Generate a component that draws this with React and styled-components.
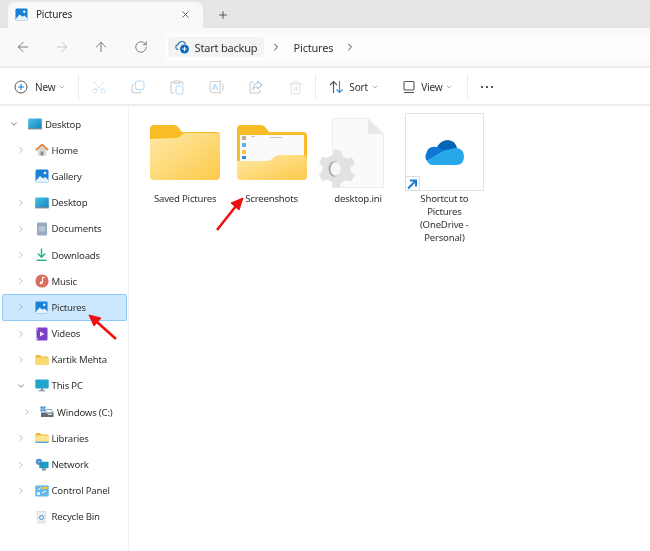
// App.jsx
import React from "react";
import styled, { createGlobalStyle } from "styled-components";
import {
  ArrowLeft,
  ArrowRight,
  ArrowUp,
  RotateCw,
  ChevronRight,
  ChevronDown,
  Plus,
  X,
  Scissors,
  Trash2,
} from "lucide-react";

const Global = createGlobalStyle`
  html, body {
    margin: 0;
    padding: 0;
    background: #ffffff;
  }
  body {
    font-family: "Noto Sans", "Open Sans", sans-serif;
    color: #2b2b2b;
  }
`;

const Window = styled.div`
  width: 650px;
  height: 551px;
  position: relative;
  overflow: hidden;
  display: flex;
  flex-direction: column;
  background: #fff;
  letter-spacing: -0.2px;
  filter: blur(0.4px);
`;

const TabBar = styled.div`
  height: 28px;
  background: #e6e6e6;
  display: flex;
  align-items: flex-end;
  padding-left: 8px;
  flex: none;
`;

const Tab = styled.div`
  width: 195px;
  height: 26px;
  background: #f9f9f9;
  border-radius: 7px 7px 0 0;
  display: flex;
  align-items: center;
  padding: 0 12px 2px 7px;
  box-sizing: border-box;
  font-size: 10px;
`;

const TabTitle = styled.span`
  margin-left: 8px;
  flex: 1;
`;

const NewTab = styled.div`
  width: 40px;
  height: 26px;
  display: flex;
  align-items: center;
  justify-content: center;
  color: #555;
  padding-bottom: 1px;
  box-sizing: border-box;
`;

const NavBar = styled.div`
  height: 38px;
  background: #f9f9f9;
  display: flex;
  align-items: center;
  padding-left: 3px;
  flex: none;
`;

const NavButton = styled.div`
  width: 39.4px;
  display: flex;
  justify-content: center;
  color: ${(p) => (p.$off ? "#bdbdbd" : "#5c5c5c")};
`;

const Address = styled.div`
  margin-left: 4px;
  flex: 1;
  height: 27px;
  background: #fdfdfd;
  border-radius: 4px 0 0 4px;
  display: flex;
  align-items: center;
  padding-left: 3px;
  font-size: 11px;
  color: #333;
`;

const Backup = styled.div`
  width: 96px;
  height: 20px;
  background: #f3f3f3;
  border-radius: 4px;
  display: flex;
  align-items: center;
  padding-left: 7px;
  box-sizing: border-box;
  gap: 5px;
`;

const Crumb = styled.span`
  margin-left: 12px;
  margin-right: 5px;
`;

const CrumbChevron = styled(ChevronRight)`
  margin-left: 6px;
  color: #444;
`;

const Separator = styled.div`
  height: 2px;
  background: #ececec;
  flex: none;
`;

const Toolbar = styled.div`
  height: 36px;
  display: flex;
  align-items: center;
  flex: none;
  font-size: 10px;
  color: #333;
  padding-top: 2px;
  box-sizing: border-box;
`;

const NewButton = styled.div`
  width: 78px;
  display: flex;
  align-items: center;
  padding-left: 14px;
  box-sizing: border-box;
  gap: 7px;
`;

const Divider = styled.div`
  width: 1px;
  height: 26px;
  background: #ececec;
  flex: none;
`;

const ToolIcon = styled.div`
  width: 39.4px;
  display: flex;
  justify-content: center;
  color: ${(p) => (p.$blue ? "#b9daf3" : "#cbcbcb")};
`;

const CutIcon = styled(Scissors)`
  transform: rotate(-90deg);
`;

const Dropdown = styled.div`
  width: ${(p) => p.$w}px;
  display: flex;
  align-items: center;
  padding-left: ${(p) => p.$pad}px;
  box-sizing: border-box;
  gap: 5px;
`;

const SmallChevron = styled(ChevronDown)`
  color: #8a8a8a;
  margin-left: ${(p) => p.$shift}px;
`;

const Dots = styled.div`
  width: 38px;
  display: flex;
  justify-content: center;
  gap: 2.5px;
`;

const Dot = styled.span`
  width: 2.5px;
  height: 2.5px;
  border-radius: 50%;
  background: #222;
`;

const Body = styled.div`
  flex: 1;
  display: flex;
  border-top: 2px solid #ececec;
  min-height: 0;
`;

const Sidebar = styled.div`
  width: 129px;
  box-sizing: border-box;
  border-right: 1px solid #f1f1f1;
  padding-top: 5px;
  flex: none;
`;

const Row = styled.div`
  height: 26.2px;
  width: 125px;
  margin-left: 2px;
  box-sizing: border-box;
  display: flex;
  align-items: center;
  padding-left: ${(p) => 6 + p.$depth * 6.5}px;
  font-size: 9.6px;
  color: #333;
  border-radius: 2px;
  border: 1px solid ${(p) => (p.$selected ? "#8fcbf5" : "transparent")};
  background: ${(p) => (p.$selected ? "#cce8ff" : "transparent")};
`;

const Chevron = styled.div`
  width: 10px;
  display: flex;
  justify-content: center;
  color: ${(p) => (p.$open ? "#444" : "#8c8c8c")};
  flex: none;
`;

const RowIcon = styled.div`
  width: 14px;
  height: 14px;
  margin-left: ${(p) => (p.$depth === 2 ? 8 : 9)}px;
  margin-right: 3px;
  flex: none;
  display: flex;
  align-items: center;
  justify-content: center;
`;

const Content = styled.div`
  flex: 1;
  display: flex;
  align-items: flex-start;
  padding: 7px 0 0 13px;
`;

const Item = styled.div`
  width: 86.4px;
  display: flex;
  flex-direction: column;
  align-items: center;
  flex: none;
`;

const Thumb = styled.div`
  width: 79px;
  height: 78px;
  box-sizing: border-box;
  display: flex;
  align-items: center;
  justify-content: center;
  position: relative;
  border: 1px solid ${(p) => (p.$framed ? "#e4e4e4" : "transparent")};
`;

const Label = styled.div`
  margin-top: 1px;
  width: 70px;
  text-align: center;
  font-size: 9.6px;
  line-height: 13.1px;
  color: #333;
`;

const ShortcutBadge = styled.div`
  position: absolute;
  left: -1px;
  bottom: -1px;
  width: 15px;
  height: 15px;
  background: #fff;
  border: 1px solid #dcdcdc;
  box-sizing: border-box;
  display: flex;
  align-items: center;
  justify-content: center;
`;

const ArrowLayer = styled.svg`
  position: absolute;
  left: 0;
  top: 0;
  pointer-events: none;
`;

const IniFile = styled.div`
  position: relative;
  width: 52px;
  height: 70px;
  margin-left: 1px;
  margin-top: 2px;
`;

const GearHolder = styled.div`
  position: absolute;
  left: -13px;
  top: 29px;
`;

const PicturesIcon = ({ size = 14 }) => (
  <svg width={size} height={size} viewBox="0 0 14 14">
    <rect x="0.5" y="0.5" width="13" height="13" rx="1.5" fill="#1b7fd6" />
    <path d="M0.5 12 L5 7 L8 9.5 L10 8 L13.5 11 V12.5 Q13.5 13.5 12.5 13.5 H1.5 Q0.5 13.5 0.5 12.5 Z" fill="#e6f3fc" />
    <circle cx="10" cy="4" r="1.3" fill="#e6f3fc" />
  </svg>
);

const DesktopIcon = () => (
  <svg width="14" height="12" viewBox="0 0 14 12">
    <defs>
      <linearGradient id="desk" x1="0" y1="0" x2="1" y2="1">
        <stop offset="0" stopColor="#46c3e4" />
        <stop offset="1" stopColor="#1681bd" />
      </linearGradient>
    </defs>
    <rect x="0.2" y="0.5" width="13.6" height="10.5" rx="1" fill="url(#desk)" />
    <rect x="0.2" y="10" width="13.6" height="1.4" fill="#6d8b9b" />
  </svg>
);

const HomeIcon = () => (
  <svg width="15" height="14" viewBox="0 0 15 14">
    <path d="M3 6.5 L7.5 2.5 L12 6.5 V13 H3 Z" fill="#d6d6d6" />
    <rect x="6" y="8.5" width="3" height="4.5" fill="#8b8b8b" />
    <path d="M0.8 7.2 L7.5 1.2 L14.2 7.2" fill="none" stroke="#de7b33" strokeWidth="1.7" />
  </svg>
);

const DocumentsIcon = () => (
  <svg width="12" height="14" viewBox="0 0 12 14">
    <rect x="1" y="0.5" width="10" height="13" rx="1" fill="#98abc0" />
    <rect x="3" y="4.5" width="6" height="5" fill="#b9c7d5" />
  </svg>
);

const DownloadsIcon = () => (
  <svg width="13" height="14" viewBox="0 0 13 14">
    <path d="M6.5 0.5 V9 M2.8 5.6 L6.5 9.3 L10.2 5.6" fill="none" stroke="#2bab8c" strokeWidth="1.4" />
    <rect x="1.5" y="11.6" width="10" height="1.4" fill="#2bab8c" />
  </svg>
);

const MusicIcon = () => (
  <svg width="14" height="14" viewBox="0 0 14 14">
    <circle cx="7" cy="7" r="6.6" fill="#d9705c" />
    <path d="M7.6 3 V8.4 M7.6 3 L9.6 3.8" stroke="#fff" strokeWidth="1.1" fill="none" />
    <circle cx="6.2" cy="8.8" r="1.5" fill="#fff" />
  </svg>
);

const VideosIcon = () => (
  <svg width="12" height="14" viewBox="0 0 12 14">
    <rect x="0.5" y="0.5" width="11" height="13" rx="1" fill="#7a3fc4" />
    <path d="M4 4.5 L8.5 7 L4 9.5 Z" fill="#f0e6ff" />
    <rect x="1" y="1.5" width="1" height="1.5" fill="#d6c2f2" />
    <rect x="1" y="11" width="1" height="1.5" fill="#d6c2f2" />
  </svg>
);

const SmallFolder = ({ light }) => (
  <svg width="14" height="12" viewBox="0 0 14 12">
    <path d="M0.5 2 Q0.5 1 1.5 1 H5 L6.5 2.4 H12.5 Q13.5 2.4 13.5 3.4 V10 Q13.5 11 12.5 11 H1.5 Q0.5 11 0.5 10 Z" fill="#eeb93d" />
    <rect x="0.5" y="3.6" width="13" height="7.4" rx="1" fill={light ? "#ffe38f" : "#fbd96f"} />
    {light && <rect x="0.5" y="9.6" width="13" height="1.4" fill="#4da6dc" />}
  </svg>
);

const MonitorIcon = () => (
  <svg width="14" height="13" viewBox="0 0 14 13">
    <rect x="0.3" y="0.5" width="13.4" height="9" rx="0.8" fill="#22a5cc" />
    <rect x="5.8" y="9.5" width="2.4" height="2" fill="#6f8794" />
    <rect x="3.8" y="11.3" width="6.4" height="1" fill="#6f8794" />
  </svg>
);

const DriveIcon = () => (
  <svg width="14" height="13" viewBox="0 0 14 13">
    <rect x="0.5" y="0.5" width="2.2" height="2.2" fill="#2b8ae0" />
    <rect x="3.2" y="0.5" width="2.2" height="2.2" fill="#2b8ae0" />
    <rect x="0.5" y="3.2" width="2.2" height="2.2" fill="#2b8ae0" />
    <rect x="3.2" y="3.2" width="2.2" height="2.2" fill="#2b8ae0" />
    <rect x="1" y="6.5" width="12.5" height="4.5" fill="#5f6a72" />
    <rect x="6" y="3.5" width="6" height="4" rx="1" fill="none" stroke="#9aa4ab" />
    <rect x="8" y="8" width="4" height="1" fill="#d9e0e4" />
  </svg>
);

const NetworkIcon = () => (
  <svg width="15" height="14" viewBox="0 0 15 14">
    <rect x="4.5" y="3.5" width="10" height="7" rx="0.8" fill="#1e9cc4" />
    <rect x="7.5" y="10.5" width="4" height="2.5" fill="#7b8f9a" />
    <circle cx="4.2" cy="3.6" r="3.3" fill="#3a82c9" />
    <path d="M1.5 3.5 H7 M4.2 0.5 V6.8" stroke="#a9d2ef" strokeWidth="0.6" />
  </svg>
);

const ControlIcon = () => (
  <svg width="14" height="12" viewBox="0 0 14 12">
    <rect x="0.3" y="0.5" width="13.4" height="11" rx="0.8" fill="#62b7e6" />
    <rect x="2" y="7" width="3" height="3" fill="#e8f4fb" />
    <rect x="7" y="2" width="5" height="2" fill="#f3c644" />
    <path d="M3 5 L6 2.5 M7 8 L11 6" stroke="#fff" strokeWidth="1" />
  </svg>
);

const RecycleIcon = () => (
  <svg width="11" height="14" viewBox="0 0 11 14">
    <path d="M1 1.5 H10 L9 13 H2 Z" fill="#eceff1" stroke="#c9ced2" strokeWidth="0.6" />
    <circle cx="5.5" cy="7.5" r="2" fill="none" stroke="#3b8fce" strokeWidth="1" />
  </svg>
);

const GearLarge = () => (
  <svg width="36" height="43" viewBox="-4 0 42 45">
    <path
      d="M14 0 L22 2 L23 8 Q26 9 28 11 L34 9 L38 17 L33 21 Q33 24 33 26 L38 30 L33 38 L27 36 Q25 38 22 39 L20 45 L12 44 L11 38 Q8 37 6 35 L0 37 L-4 30 L0 25 L0 20 L-4 16 L0 9 L6 10 Q9 8 12 7 Z"
      fill="#e2e2e2"
    />
    <ellipse cx="14" cy="23" rx="7" ry="9" fill="#adadad" />
    <ellipse cx="15.5" cy="23" rx="6" ry="8" fill="#f6f6f6" />
  </svg>
);

const FolderPlain = () => (
  <svg width="70" height="55" viewBox="0 0 70 55">
    <defs>
      <linearGradient id="fold1" x1="0" y1="0" x2="1" y2="1">
        <stop offset="0" stopColor="#ffe9a6" />
        <stop offset="1" stopColor="#fcc94a" />
      </linearGradient>
    </defs>
    <path d="M0 4 Q0 0 4 0 H24 Q27 0 29 3 L32 7 H66 Q70 7 70 10 V20 H0 Z" fill="#f8bd26" />
    <path d="M0 14 L26 13 Q29 13 32 10 L34 8 H66 Q70 8 70 12 V51 Q70 55 66 55 H4 Q0 55 0 51 Z" fill="url(#fold1)" />
  </svg>
);

const FolderPreview = () => (
  <svg width="70" height="55" viewBox="0 0 70 55">
    <defs>
      <linearGradient id="fold2" x1="0" y1="0" x2="1" y2="1">
        <stop offset="0" stopColor="#ffe9a6" />
        <stop offset="1" stopColor="#fcc94a" />
      </linearGradient>
    </defs>
    <path d="M0 4 Q0 0 4 0 H24 Q27 0 29 3 L32 7 H66 Q70 7 70 11 V40 H0 Z" fill="#f8bd26" />
    <rect x="3" y="10" width="64" height="30" fill="#fafafa" />
    <rect x="5" y="11" width="4" height="4" fill="#c9a98c" />
    <rect x="5" y="18" width="4" height="4" fill="#5bb2e0" />
    <rect x="5" y="25" width="4" height="4" fill="#f3c644" />
    <rect x="5" y="31" width="4" height="3" fill="#2b8ae0" />
    <rect x="14" y="11" width="4" height="1" fill="#c4c4c4" />
    <rect x="33" y="12" width="12" height="1" fill="#c4c4c4" />
    <path d="M0 36 L30 36 Q33 36 36 33 Q39 30 42 30 L66 30 Q70 30 70 34 V51 Q70 55 66 55 H4 Q0 55 0 51 Z" fill="url(#fold2)" />
  </svg>
);

const IniSheet = () => (
  <svg width="52" height="70" viewBox="0 0 52 70">
    <path d="M0.5 0.5 H36 L51.5 16 V69.5 H0.5 Z" fill="#fafafa" stroke="#ececec" />
    <path d="M36 0.5 V16 H51.5 Z" fill="#e9e9e9" />
  </svg>
);

const OneDrive = () => (
  <svg width="40" height="27" viewBox="0 0 40 27">
    <path d="M13 8 Q17 1 24 1 Q31 1.5 33 9 L20 14 Z" fill="#0364b8" />
    <path d="M13 8 Q4 6.5 2.5 14 Q0 18 3 22 L20 12 Z" fill="#0f78d4" />
    <path d="M33 9 Q40 10 40 17.5 Q40 26 32 26 H9 Q5 26 3 22 L20 11.5 L27 10 Q30 8.5 33 9 Z" fill="#28a8ea" />
  </svg>
);

const NewIcon = () => (
  <svg width="14" height="14" viewBox="0 0 14 14">
    <circle cx="7" cy="7" r="6" fill="none" stroke="#555" strokeWidth="1" />
    <path d="M7 4 V10 M4 7 H10" stroke="#1a7fd0" strokeWidth="1.1" />
  </svg>
);

const BackupIcon = () => (
  <svg width="15" height="14" viewBox="0 0 15 14">
    <path d="M3.5 9.5 Q0.8 9.5 0.8 7 Q0.8 5 3 4.6 Q3.8 1.5 6.8 1.5 Q9.5 1.5 10.4 4" fill="none" stroke="#2b6ea8" strokeWidth="1.1" />
    <circle cx="9.5" cy="9" r="4.5" fill="#0f6cbd" />
    <path d="M9.5 6.8 V11.2 M7.3 9 H11.7" stroke="#fff" strokeWidth="1" />
  </svg>
);

const CopyIcon = () => (
  <svg width="14" height="14" viewBox="0 0 14 14" fill="none" strokeWidth="1.1">
    <rect x="4.5" y="1" width="8.5" height="8.5" rx="2" stroke="#b9daf3" />
    <path d="M3 4 Q1 4.5 1 6.5 V10 Q1 13 4 13 H7.5 Q9.5 13 10 11" stroke="#cbcbcb" />
  </svg>
);

const PasteIcon = () => (
  <svg width="14" height="15" viewBox="0 0 14 15" fill="none" strokeWidth="1.1">
    <path d="M4 2 H2 Q1 2 1 3 V12 Q1 13 2 13 H4 M10 2 H12 Q13 2 13 3 V5" stroke="#cbcbcb" />
    <rect x="4" y="1" width="6" height="2.4" rx="0.8" stroke="#cbcbcb" />
    <rect x="6" y="6" width="7" height="8" rx="1.4" stroke="#b9daf3" />
  </svg>
);

const RenameIcon = () => (
  <svg width="15" height="14" viewBox="0 0 15 14" fill="none" strokeWidth="1">
    <path d="M9.5 1.5 H3 Q1 1.5 1 3.5 V10.5 Q1 12.5 3 12.5 H9.5" stroke="#cbcbcb" />
    <path d="M11 1 V13 M9.5 1 H12.5 M9.5 13 H12.5 M12.5 3.5 Q14 3.8 14 5 V9 Q14 10.2 12.5 10.5" stroke="#cbcbcb" />
    <path d="M3.4 10 L6 4 L8.6 10 M4.3 8 H7.7" stroke="#a9d2f0" />
  </svg>
);

const ShareIcon = () => (
  <svg width="14" height="14" viewBox="0 0 14 14" fill="none" strokeWidth="1.1">
    <path d="M5 2 H3 Q1 2 1 4 V11 Q1 13 3 13 H9 Q11 13 11 11 V10" stroke="#cbcbcb" />
    <path d="M8.5 1 L13 5 L8.5 9 V6.8 Q5 6.8 4 10 Q4 3.5 8.5 3.3 Z" stroke="#a9d2f0" strokeLinejoin="round" />
  </svg>
);

const SortIcon = () => (
  <svg width="15" height="14" viewBox="0 0 15 14" fill="none" strokeWidth="1.1">
    <path d="M4.5 13 V1.5 M1 5 L4.5 1.5 L8 5" stroke="#555" />
    <path d="M10.5 1 V12.5 M7.5 9.5 L10.5 12.5 L13.5 9.5" stroke="#2a8fdc" />
  </svg>
);

const ViewIcon = () => (
  <svg width="14" height="14" viewBox="0 0 14 14" fill="none" stroke="#555" strokeWidth="1.1">
    <rect x="2" y="1.5" width="10" height="8.5" rx="1.2" />
    <path d="M2 12.5 H12" />
  </svg>
);

const ShortcutArrow = () => (
  <svg width="12" height="12" viewBox="0 0 12 12" fill="none" stroke="#1c80d8" strokeWidth="2">
    <path d="M2 10.5 L10 2.5 M4 2.5 H10 V8.5" />
  </svg>
);

const rows = [
  { label: "Desktop", icon: <DesktopIcon />, open: true, depth: 0 },
  { label: "Home", icon: <HomeIcon />, depth: 1, more: true },
  { label: "Gallery", icon: <PicturesIcon />, depth: 1 },
  { label: "Desktop", icon: <DesktopIcon />, depth: 1, more: true },
  { label: "Documents", icon: <DocumentsIcon />, depth: 1, more: true },
  { label: "Downloads", icon: <DownloadsIcon />, depth: 1, more: true },
  { label: "Music", icon: <MusicIcon />, depth: 1, more: true },
  { label: "Pictures", icon: <PicturesIcon size={13} />, depth: 1, more: true, selected: true },
  { label: "Videos", icon: <VideosIcon />, depth: 1, more: true },
  { label: "Kartik Mehta", icon: <SmallFolder />, depth: 1, more: true },
  { label: "This PC", icon: <MonitorIcon />, open: true, depth: 1 },
  { label: "Windows (C:)", icon: <DriveIcon />, depth: 2, more: true },
  { label: "Libraries", icon: <SmallFolder light />, depth: 1, more: true },
  { label: "Network", icon: <NetworkIcon />, depth: 1, more: true },
  { label: "Control Panel", icon: <ControlIcon />, depth: 1, more: true },
  { label: "Recycle Bin", icon: <RecycleIcon />, depth: 1 },
];

const App = () => (
  <>
    <Global />
    <Window>
      <TabBar>
        <Tab>
          <PicturesIcon size={13} />
          <TabTitle>Pictures</TabTitle>
          <X size={11} color="#555" />
        </Tab>
        <NewTab>
          <Plus size={12} />
        </NewTab>
      </TabBar>
      <NavBar>
        <NavButton>
          <ArrowLeft size={16} strokeWidth={1.2} />
        </NavButton>
        <NavButton $off>
          <ArrowRight size={16} strokeWidth={1.2} />
        </NavButton>
        <NavButton>
          <ArrowUp size={16} strokeWidth={1.2} />
        </NavButton>
        <NavButton>
          <RotateCw size={14} strokeWidth={1.3} />
        </NavButton>
        <Address>
          <Backup>
            <BackupIcon />
            <span>Start backup</span>
          </Backup>
          <CrumbChevron size={12} />
          <Crumb>Pictures</Crumb>
          <CrumbChevron size={12} />
        </Address>
      </NavBar>
      <Separator />
      <Toolbar>
        <NewButton>
          <NewIcon />
          <span>New</span>
          <SmallChevron size={8} $shift={-4} />
        </NewButton>
        <Divider />
        <ToolIcon $blue>
          <CutIcon size={16} strokeWidth={1} />
        </ToolIcon>
        <ToolIcon>
          <CopyIcon />
        </ToolIcon>
        <ToolIcon>
          <PasteIcon />
        </ToolIcon>
        <ToolIcon>
          <RenameIcon />
        </ToolIcon>
        <ToolIcon>
          <ShareIcon />
        </ToolIcon>
        <ToolIcon>
          <Trash2 size={15} strokeWidth={1} />
        </ToolIcon>
        <Divider />
        <Dropdown $w={76} $pad={13}>
          <SortIcon />
          <span>Sort</span>
          <SmallChevron size={8} $shift={-2} />
        </Dropdown>
        <Dropdown $w={74.6} $pad={10}>
          <ViewIcon />
          <span>View</span>
          <SmallChevron size={8} $shift={-2} />
        </Dropdown>
        <Divider />
        <Dots>
          <Dot />
          <Dot />
          <Dot />
        </Dots>
      </Toolbar>
      <Body>
        <Sidebar>
          {rows.map((r, i) => (
            <Row key={i} $depth={r.depth} $selected={r.selected}>
              <Chevron $open={r.open}>
                {r.open ? (
                  <ChevronDown size={10} strokeWidth={1.6} />
                ) : r.more ? (
                  <ChevronRight size={10} strokeWidth={1.4} />
                ) : null}
              </Chevron>
              <RowIcon $depth={r.depth}>{r.icon}</RowIcon>
              <span>{r.label}</span>
            </Row>
          ))}
        </Sidebar>
        <Content>
          <Item>
            <Thumb>
              <FolderPlain />
            </Thumb>
            <Label>Saved Pictures</Label>
          </Item>
          <Item>
            <Thumb>
              <FolderPreview />
            </Thumb>
            <Label>Screenshots</Label>
          </Item>
          <Item>
            <Thumb>
              <IniFile>
                <IniSheet />
                <GearHolder>
                  <GearLarge />
                </GearHolder>
              </IniFile>
            </Thumb>
            <Label>desktop.ini</Label>
          </Item>
          <Item>
            <Thumb $framed>
              <OneDrive />
              <ShortcutBadge>
                <ShortcutArrow />
              </ShortcutBadge>
            </Thumb>
            <Label>Shortcut to Pictures (OneDrive - Personal)</Label>
          </Item>
        </Content>
      </Body>
      <ArrowLayer width="650" height="551" viewBox="0 0 650 551">
        <path d="M217 230 L236 206" stroke="#ee1111" strokeWidth="2.6" fill="none" />
        <path d="M243 198 L231 203 L239 210 Z" fill="#ee1111" stroke="#ee1111" />
        <path d="M116 339 L97 322" stroke="#ee1111" strokeWidth="2.6" fill="none" />
        <path d="M89 315 L101 318 L94 326 Z" fill="#ee1111" stroke="#ee1111" />
      </ArrowLayer>
    </Window>
  </>
);

export default App;
